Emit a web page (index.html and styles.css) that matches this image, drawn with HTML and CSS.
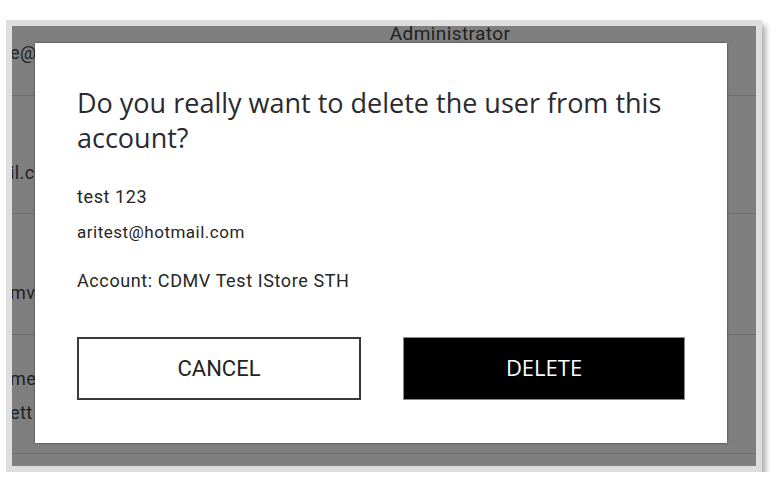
FILE: index.html
```html
<!DOCTYPE html>
<html lang="en">
<head>
    <meta charset="UTF-8">
    <meta name="viewport" content="width=device-width, initial-scale=1.0">
    <title>Delete user</title>
    <link rel="stylesheet" href="styles.css">
</head>
<body>
    <div class="frame">
        <div class="screen">
            <div class="user-table">
                <div class="row row-first">
                    <div class="cell cell-email"><span class="cut">e@cdmv.ca</span></div>
                    <div class="cell cell-role">Administrator</div>
                </div>
                <div class="row row-second">
                    <div class="cell cell-email"><span class="cut">il.com</span></div>
                </div>
                <div class="row row-third">
                    <div class="cell cell-email"><span class="cut">mv.ca</span></div>
                </div>
                <div class="row row-fourth">
                    <div class="cell cell-email">
                        <div class="cut">me</div>
                        <div class="cut second-line">ett</div>
                    </div>
                </div>
            </div>

            <div class="overlay"></div>

            <div class="modal">
                <h2 class="modal-title">Do you really want to delete the user from this account?</h2>
                <p class="user-name">test 123</p>
                <p class="user-email">aritest@hotmail.com</p>
                <p class="user-account">Account: CDMV Test IStore STH</p>
                <div class="modal-actions">
                    <button type="button" class="btn btn-cancel">CANCEL</button>
                    <button type="button" class="btn btn-delete">DELETE</button>
                </div>
            </div>
        </div>
    </div>
</body>
</html>
```

FILE: styles.css
```css
body {
    margin: 0;
    padding: 20px 0 0 6px;
    background-color: #fff;
    font-family: Roboto, 'Liberation Sans', sans-serif;
}

.frame {
    width: 744px;
    padding: 6px;
    background-color: #dedede;
    box-shadow: 4px 5px 5px rgba(0, 0, 0, 0.3);
}

.screen {
    position: relative;
    height: 440px;
    overflow: hidden;
    background-color: #fff;
}

/* table behind the dialog */
.row {
    display: flex;
    border-bottom: 1px solid #dcdcdc;
    box-sizing: border-box;
    font-size: 18px;
    line-height: 20px;
    letter-spacing: 0.4px;
    color: #444;
}

.row-first { height: 70px; }
.row-second { height: 118px; }
.row-third { height: 121px; }
.row-fourth { height: 119px; }

.cell-email {
    width: 300px;
    white-space: nowrap;
    overflow: hidden;
}

.cut {
    margin-left: -2px;
}

.row-first .cell-email { padding-top: 17px; }
.row-second .cell-email { padding-top: 67px; }
.row-third .cell-email { padding-top: 69px; }
.row-fourth .cell-email { padding-top: 34px; }

.second-line {
    margin-top: 14px;
}

.cell-role {
    width: 276px;
    text-align: center;
    margin-top: -2px;
    font-size: 19px;
}

.overlay {
    position: absolute;
    top: 0;
    left: 0;
    right: 0;
    bottom: 0;
    background-color: rgba(0, 0, 0, 0.5);
}

/* dialog */
.modal {
    position: absolute;
    left: 23px;
    top: 17px;
    width: 692px;
    height: 400px;
    box-sizing: border-box;
    padding: 42px 42px 0 42px;
    background-color: #fff;
    box-shadow: 0 0 2px rgba(0, 0, 0, 0.6);
    color: #262626;
}

.modal-title {
    margin: 0 0 30px 0;
    font-family: 'Open Sans', sans-serif;
    font-weight: 400;
    font-size: 27px;
    line-height: 35px;
    color: #2a2a30;
}

.modal p {
    margin: 0;
}

.user-name {
    font-size: 18px;
    line-height: 24px;
    letter-spacing: 0.6px;
}

.user-email {
    margin-top: 12px !important;
    font-size: 17px;
    line-height: 22px;
    letter-spacing: 0.5px;
}

.user-account {
    margin-top: 27px !important;
    font-size: 18px;
    line-height: 22px;
    letter-spacing: 0.6px;
}

.modal-actions {
    display: flex;
    gap: 42px;
    margin-top: 45px;
}

.btn {
    flex: 1;
    height: 63px;
    box-sizing: border-box;
    cursor: pointer;
}

.btn-cancel {
    background-color: #fff;
    border: 2px solid #3a3a3a;
    font-family: Roboto, sans-serif;
    font-size: 22px;
    color: #222;
}

.btn-delete {
    background-color: #000;
    border: 1px solid #8a8a8a;
    padding-bottom: 5px;
    font-family: 'Open Sans', sans-serif;
    font-size: 22px;
    color: #fff;
}
```
